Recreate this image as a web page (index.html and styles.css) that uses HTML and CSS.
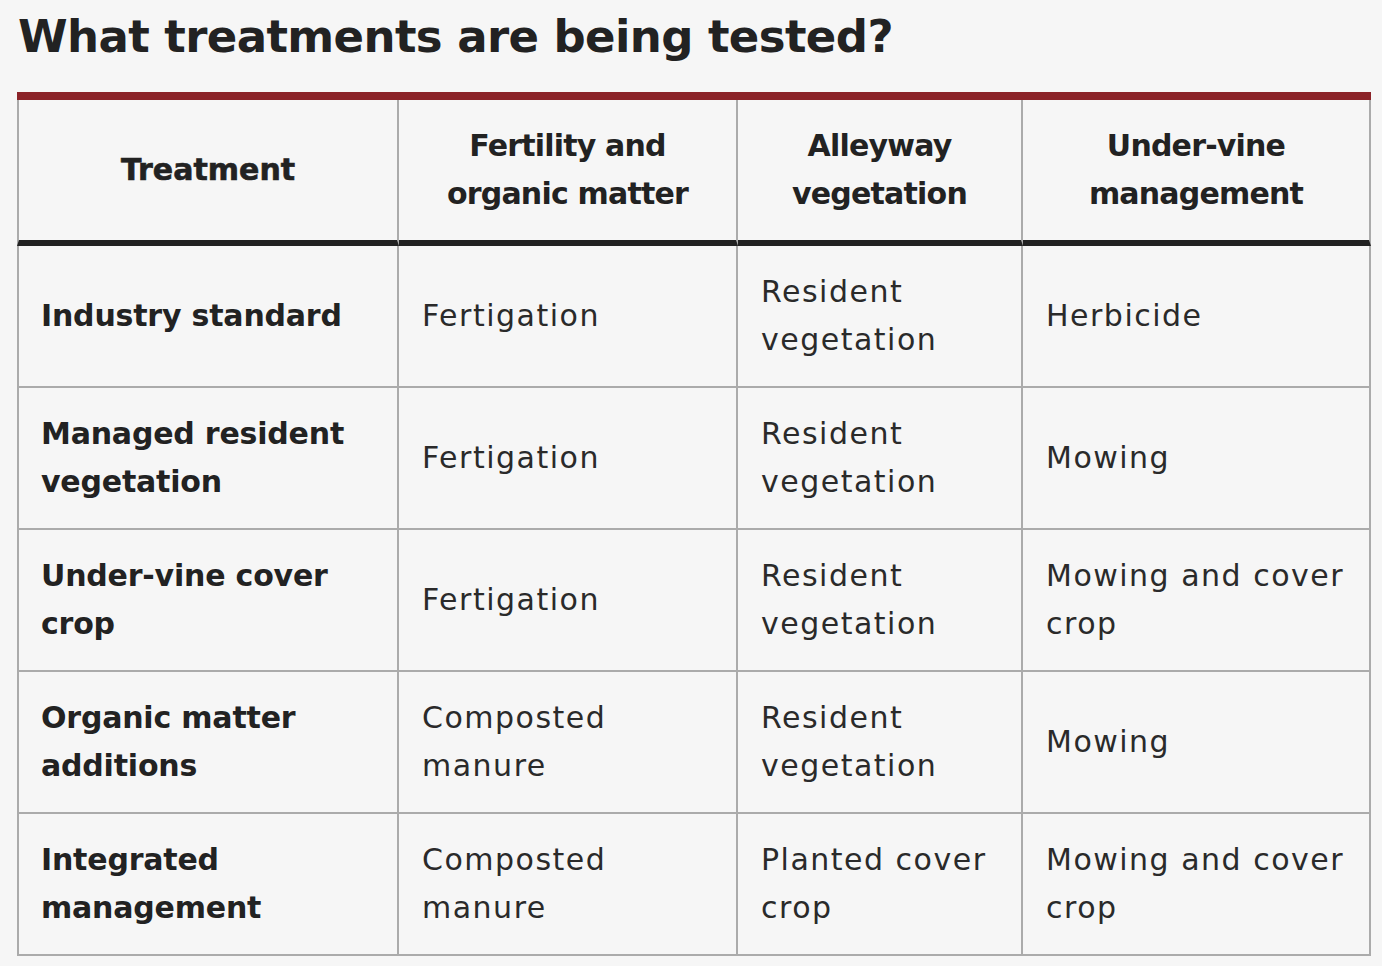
FILE: index.html
```html
<!DOCTYPE html>
<html lang="en">
<head>
<meta charset="utf-8">
<title>What treatments are being tested?</title>
<link rel="stylesheet" href="styles.css">
</head>
<body>
<main class="page">
  <h1 class="title">What treatments are being tested?</h1>
  <table class="treatments">
    <colgroup>
      <col class="c1"><col class="c2"><col class="c3"><col class="c4">
    </colgroup>
    <thead>
      <tr>
        <th class="th-main">Treatment</th>
        <th>Fertility and<br>organic matter</th>
        <th>Alleyway<br>vegetation</th>
        <th>Under-vine<br>management</th>
      </tr>
    </thead>
    <tbody>
      <tr>
        <td class="name">Industry standard</td>
        <td>Fertigation</td>
        <td>Resident<br>vegetation</td>
        <td>Herbicide</td>
      </tr>
      <tr>
        <td class="name">Managed resident<br>vegetation</td>
        <td>Fertigation</td>
        <td>Resident<br>vegetation</td>
        <td>Mowing</td>
      </tr>
      <tr>
        <td class="name">Under-vine cover<br>crop</td>
        <td>Fertigation</td>
        <td>Resident<br>vegetation</td>
        <td>Mowing and cover<br>crop</td>
      </tr>
      <tr>
        <td class="name">Organic matter<br>additions</td>
        <td>Composted<br>manure</td>
        <td>Resident<br>vegetation</td>
        <td>Mowing</td>
      </tr>
      <tr>
        <td class="name">Integrated<br>management</td>
        <td>Composted<br>manure</td>
        <td>Planted cover<br>crop</td>
        <td>Mowing and cover<br>crop</td>
      </tr>
    </tbody>
  </table>
</main>
</body>
</html>
```

FILE: styles.css
```css
html, body {
  margin: 0;
  padding: 0;
  background: #f6f6f6;
}

body {
  font-family: "DejaVu Sans", "Liberation Sans", sans-serif;
  color: #222222;
}

.page {
  padding: 10px 11px 0 17px;
}

.title {
  margin: 0 0 28px 1px;
  font-size: 45px;
  line-height: 54px;
  font-weight: 700;
  letter-spacing: -0.6px;
  color: #222222;
}

.treatments {
  width: 1354px;
  table-layout: fixed;
  border-collapse: separate;
  border-spacing: 0;
  border-top: 8px solid #8b2328;
}

.c1 { width: 382px; }
.c2 { width: 339px; }
.c3 { width: 285px; }
.c4 { width: 348px; }

.treatments th,
.treatments td {
  border-right: 2px solid #ababab;
  border-bottom: 2px solid #ababab;
  vertical-align: middle;
  font-size: 30px;
  line-height: 48px;
}

.treatments th:first-child,
.treatments td:first-child {
  border-left: 2px solid #ababab;
}

.treatments th {
  height: 140px;
  box-sizing: border-box;
  padding: 22px 10px;
  border-bottom: 6px solid #222222;
  text-align: center;
  font-weight: 700;
  letter-spacing: -0.8px;
}

.treatments .th-main {
  letter-spacing: 0;
  -webkit-text-stroke: 0.6px #222222;
}

.treatments td {
  height: 140px;
  box-sizing: border-box;
  padding: 22px 8px 22px 23px;
  text-align: left;
  font-weight: 400;
  letter-spacing: 1.5px;
  color: #2a2a2a;
}

.treatments td.name {
  padding-left: 22px;
  font-weight: 700;
  letter-spacing: -0.2px;
  color: #222222;
}
```
